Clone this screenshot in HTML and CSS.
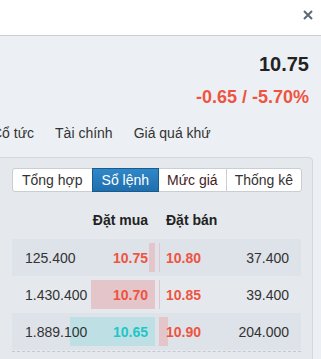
FILE: index.html
```html
<!DOCTYPE html>
<html lang="vi">

<head>
    <meta charset="UTF-8">
    <meta name="viewport" content="width=device-width, initial-scale=1.0">
    <title>Sổ lệnh</title>
    <link rel="stylesheet" href="styles.css">
</head>

<body>
    <div class="topbar">
        <button class="close" type="button" aria-label="Đóng">
            <svg width="10" height="10" viewBox="0 0 10 10">
                <path d="M1 1L9 9M9 1L1 9" stroke="#5d6975" stroke-width="2" stroke-linecap="butt" />
            </svg>
        </button>
    </div>

    <div class="content">
        <div class="quote">
            <div class="last">10.75</div>
            <div class="change">-0.65 / -5.70%</div>
        </div>

        <nav class="subtabs">
            <a>Cổ tức</a>
            <a>Tài chính</a>
            <a>Giá quá khứ</a>
        </nav>

        <section class="panel">
            <div class="btn-group">
                <button type="button" class="btn">Tổng hợp</button>
                <button type="button" class="btn active">Sổ lệnh</button>
                <button type="button" class="btn narrow hover">Mức giá</button>
                <button type="button" class="btn narrow">Thống kê</button>
            </div>

            <div class="book">
                <div class="book-head">
                    <div class="bid">Đặt mua</div>
                    <div class="ask">Đặt bán</div>
                </div>

                <div class="book-row odd">
                    <div class="bid">
                        <span class="bar pink" style="width: 6px"></span>
                        <span class="vol">125.400</span>
                        <span class="price">10.75</span>
                    </div>
                    <div class="ask">
                        <span class="bar pink" style="width: 1px"></span>
                        <span class="price">10.80</span>
                        <span class="vol">37.400</span>
                    </div>
                </div>

                <div class="book-row">
                    <div class="bid">
                        <span class="bar pink" style="width: 64px"></span>
                        <span class="vol">1.430.400</span>
                        <span class="price">10.70</span>
                    </div>
                    <div class="ask">
                        <span class="bar pink" style="width: 1px"></span>
                        <span class="price">10.85</span>
                        <span class="vol">39.400</span>
                    </div>
                </div>

                <div class="book-row odd">
                    <div class="bid">
                        <span class="bar teal" style="width: 85px"></span>
                        <span class="vol">1.889.100</span>
                        <span class="price floor">10.65</span>
                    </div>
                    <div class="ask">
                        <span class="bar pink" style="width: 9px"></span>
                        <span class="price">10.90</span>
                        <span class="vol">204.000</span>
                    </div>
                </div>

                <div class="book-foot"></div>
            </div>
        </section>
    </div>
</body>

</html>
```

FILE: styles.css
```css
body {
    margin: 0;
    width: 321px;
    height: 359px;
    overflow: hidden;
    font-family: "Liberation Sans", Arial, sans-serif;
    font-size: 14px;
    color: #333;
    background-color: #ecf0f4;
}

.topbar {
    height: 36px;
    box-sizing: border-box;
    border-bottom: 1px solid #c8ced5;
    background-color: #fff;
    display: flex;
    justify-content: flex-end;
    align-items: flex-start;
    padding: 10px 8px 0 0;
}

.close {
    border: none;
    background: none;
    padding: 0;
    width: 10px;
    height: 10px;
    display: block;
    cursor: pointer;
}

.close svg {
    display: block;
}

.quote {
    padding: 16px 12px 0 0;
    text-align: right;
}

.last {
    font-size: 20px;
    line-height: 24px;
    font-weight: bold;
    color: #222;
}

.change {
    margin-top: 10px;
    font-size: 18px;
    line-height: 22px;
    font-weight: bold;
    color: #ee5441;
}

.subtabs {
    margin: 15px 0 0 -8px;
    display: flex;
    gap: 21px;
    line-height: 20px;
    white-space: nowrap;
}

.subtabs a {
    color: #333;
    cursor: pointer;
}

.panel {
    margin: 14px 8px 0 -10px;
    padding: 10px 11px 20px 21px;
    border: 1px solid #d3d8de;
    border-radius: 4px;
    background-color: #e5e9ee;
}

.btn-group {
    display: flex;
}

.btn {
    font-family: inherit;
    font-size: 14px;
    line-height: 22px;
    padding: 0 9px;
    margin: 0 0 0 -1px;
    border: 1px solid #c9ced3;
    background-color: #fff;
    color: #333;
    cursor: pointer;
    border-radius: 0;
    white-space: nowrap;
}

.btn.narrow {
    padding: 0 8px;
}

.btn:first-child {
    margin-left: 0;
    border-radius: 3px 0 0 3px;
}

.btn:last-child {
    border-radius: 0 3px 3px 0;
}

.btn.active {
    position: relative;
    background: linear-gradient(#3088c8, #1f6fae);
    border-color: #1a5b8e;
    color: #fff;
}

.btn.hover {
    color: #45211f;
}

.book {
    margin-top: 18px;
}

.book-head,
.book-row {
    display: grid;
    grid-template-columns: 143px 142px;
    column-gap: 4px;
}

.book-head {
    height: 20px;
    line-height: 20px;
    font-weight: bold;
    color: #222;
    margin-bottom: 9px;
}

.book-head .bid {
    text-align: right;
    padding-right: 7px;
}

.book-head .ask {
    padding-left: 7px;
}

.book-row {
    height: 37px;
}

.book-row.odd {
    background-color: #dee2e9;
}

.book-row .bid,
.book-row .ask {
    position: relative;
    display: flex;
    align-items: center;
    justify-content: space-between;
}

.book-row .bid {
    padding: 0 7px 0 13px;
}

.book-row .ask {
    padding: 0 12px 0 7px;
}

.bar {
    position: absolute;
    top: 4px;
    bottom: 4px;
}

.bid .bar {
    right: 0;
}

.ask .bar {
    left: 0;
}

.bar.pink {
    background-color: #e4c5c9;
}

.bar.teal {
    background-color: #bee0e4;
}

.vol,
.price {
    position: relative;
}

.price {
    font-weight: bold;
    color: #ee5441;
}

.price.floor {
    color: #1fc6c8;
}

.book-foot {
    margin-top: 1px;
    border-top: 1px dashed #c4c9cf;
}
```
